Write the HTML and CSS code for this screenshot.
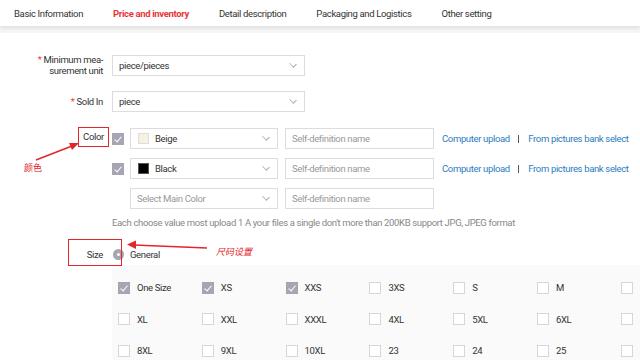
FILE: index.html
```html
<!DOCTYPE html>
<html lang="en">
<head>
    <meta charset="UTF-8">
    <title>Price and inventory</title>
    <link rel="stylesheet" href="styles.css">
</head>
<body>
    <nav class="tabs">
        <a class="tab">Basic Information</a>
        <a class="tab active">Price and inventory</a>
        <a class="tab">Detail description</a>
        <a class="tab">Packaging and Logistics</a>
        <a class="tab">Other setting</a>
    </nav>

    <main class="form">
        <div class="row">
            <div class="label two-line"><span class="req">*</span> Minimum mea-<br>surement unit</div>
            <div class="select wide"><span>piece/pieces</span><i class="chevron"></i></div>
        </div>

        <div class="row sold">
            <div class="label"><span class="req">*</span> Sold In</div>
            <div class="select wide"><span>piece</span><i class="chevron"></i></div>
        </div>

        <div class="row color-row">
            <div class="label"><span class="mark">Color</span></div>
            <div class="color-list">
                <div class="color-item">
                    <span class="check on"></span>
                    <div class="select color"><span class="swatch beige"></span><span>Beige</span><i class="chevron"></i></div>
                    <div class="input">Self-definition name</div>
                    <div class="links"><a>Computer upload</a><span class="bar"></span><a>From pictures bank select</a></div>
                </div>
                <div class="color-item">
                    <span class="check on"></span>
                    <div class="select color"><span class="swatch black"></span><span>Black</span><i class="chevron"></i></div>
                    <div class="input">Self-definition name</div>
                    <div class="links"><a>Computer upload</a><span class="bar"></span><a>From pictures bank select</a></div>
                </div>
                <div class="color-item">
                    <span class="check blank"></span>
                    <div class="select color"><span class="placeholder">Select Main Color</span><i class="chevron"></i></div>
                    <div class="input">Self-definition name</div>
                </div>
            </div>
        </div>

        <p class="hint">Each choose value most upload 1 A your files a single don't more than 200KB support JPG, JPEG format</p>

        <div class="row size-row">
            <div class="label">Size</div>
            <span class="radio"></span>
            <span class="radio-text">General</span>
        </div>

        <div class="sizes">
            <label class="size"><span class="check on"></span>One Size</label>
            <label class="size"><span class="check on"></span>XS</label>
            <label class="size"><span class="check on"></span>XXS</label>
            <label class="size"><span class="check"></span>3XS</label>
            <label class="size"><span class="check"></span>S</label>
            <label class="size"><span class="check"></span>M</label>
            <label class="size"><span class="check"></span></label>

            <label class="size"><span class="check"></span>XL</label>
            <label class="size"><span class="check"></span>XXL</label>
            <label class="size"><span class="check"></span>XXXL</label>
            <label class="size"><span class="check"></span>4XL</label>
            <label class="size"><span class="check"></span>5XL</label>
            <label class="size"><span class="check"></span>6XL</label>
            <label class="size"><span class="check"></span></label>

            <label class="size"><span class="check"></span>8XL</label>
            <label class="size"><span class="check"></span>9XL</label>
            <label class="size"><span class="check"></span>10XL</label>
            <label class="size"><span class="check"></span>23</label>
            <label class="size"><span class="check"></span>24</label>
            <label class="size"><span class="check"></span>25</label>
            <label class="size"><span class="check"></span></label>
        </div>
    </main>

    <!-- red annotations drawn over the screenshot -->
    <div class="note-box size-box"></div>
    <span class="note color-note">颜色</span>
    <span class="note size-note">尺码设置</span>
    <svg class="arrows" width="640" height="360" viewBox="0 0 640 360">
        <line x1="36" y1="160" x2="72" y2="146" stroke="#e2262b" stroke-width="1.5"/>
        <polygon points="79,143 69,143 72,150" fill="#e2262b"/>
        <line x1="207" y1="248" x2="134" y2="245" stroke="#e2262b" stroke-width="1.5"/>
        <polygon points="127,244.5 136,240.5 136,249" fill="#e2262b"/>
    </svg>
</body>
</html>
```

FILE: styles.css
```css
body {
    margin: 0;
    width: 640px;
    height: 360px;
    overflow: hidden;
    position: relative;
    background: #fff;
    font-family: Roboto, "Noto Sans CJK SC", sans-serif;
    font-size: 9.5px;
    letter-spacing: -0.35px;
    color: #333;
}

.tabs {
    display: flex;
    gap: 30px;
    height: 26px;
    align-items: center;
    padding-left: 14px;
    border-bottom: 1px solid #e6e6e6;
    box-shadow: 0 2px 3px rgba(0, 0, 0, 0.08), 0 6px 0 #f7f7f7;
}

.tab {
    color: #333;
    white-space: nowrap;
}

.tab.active {
    color: #e8363d;
    font-weight: bold;
}

.form {
    padding-top: 27px;
}

.row {
    display: flex;
    align-items: center;
}

.label {
    width: 103px;
    margin-right: 9px;
    text-align: right;
    flex: none;
}

.two-line {
    line-height: 11px;
}

.req {
    color: #e8363d;
}

.select {
    display: flex;
    align-items: center;
    box-sizing: border-box;
    height: 21px;
    border: 1px solid #dcdcdc;
    padding: 0 0 0 6px;
    position: relative;
}

.select.wide {
    width: 193px;
}

.chevron {
    position: absolute;
    right: 8px;
    top: 5px;
    width: 5px;
    height: 5px;
    border-right: 1px solid #aaa;
    border-bottom: 1px solid #aaa;
    transform: rotate(45deg) scale(1, 0.8);
}

.sold {
    margin-top: 15px;
}

.color-row {
    margin-top: 16px;
    align-items: flex-start;
}

.mark {
    display: inline-block;
    box-sizing: border-box;
    width: 31px;
    height: 20px;
    line-height: 18px;
    border: 1.5px solid #e2262b;
    text-align: center;
    margin-right: -6px;
    margin-top: -1px;
}

.color-list {
    display: flex;
    flex-direction: column;
    gap: 9px;
}

.color-item {
    display: flex;
    align-items: center;
}

.check {
    display: inline-block;
    box-sizing: border-box;
    width: 12px;
    height: 12px;
    border: 1px solid #d6d6d6;
    background: #fff;
    position: relative;
    flex: none;
}

.check.on {
    background: #a6a5b1;
    border-color: #a6a5b1;
}

.check.on::after {
    content: '';
    position: absolute;
    left: 3px;
    top: 1px;
    width: 3px;
    height: 6px;
    border-right: 1px solid #fff;
    border-bottom: 1px solid #fff;
    transform: rotate(40deg);
}

.check.blank {
    visibility: hidden;
}

.select.color {
    width: 148px;
    margin-left: 6px;
}

.swatch {
    width: 9px;
    height: 9px;
    border: 1px solid #ddd;
    margin-right: 6px;
    margin-left: 1px;
}

.swatch.beige {
    background: #f6f2e2;
}

.swatch.black {
    background: #000;
    border-color: #555;
}

.placeholder {
    color: #999;
}

.input {
    box-sizing: border-box;
    width: 149px;
    height: 21px;
    line-height: 19px;
    border: 1px solid #dcdcdc;
    padding-left: 6px;
    margin-left: 7px;
    color: #999;
}

.links {
    display: flex;
    align-items: center;
    margin-left: 8px;
    color: #2a7dbf;
    white-space: nowrap;
}

.links .bar {
    width: 1.5px;
    height: 8px;
    background: #555;
    margin: 0 9px 0 8px;
}

.hint {
    margin: 7px 0 0 112px;
    line-height: 14px;
    color: #888;
    white-space: nowrap;
}

.size-row {
    margin-top: 14px;
    height: 20px;
}

.radio {
    width: 11px;
    height: 11px;
    border-radius: 50%;
    background: #a6a5b1;
    margin-left: 1px;
    position: relative;
}

.radio::after {
    content: '';
    position: absolute;
    left: 4px;
    top: 4px;
    width: 3px;
    height: 3px;
    border-radius: 50%;
    background: #fff;
}

.radio-text {
    margin-left: 6px;
}

.sizes {
    margin: 1px 0 0 112px;
    padding: 7px 0 0 6px;
    background: #fafafa;
    display: grid;
    grid-template-columns: repeat(7, 83.8px);
    grid-auto-rows: 31.5px;
    align-items: center;
    height: 200px;
    align-content: start;
}

.size {
    display: flex;
    align-items: center;
    gap: 7px;
    white-space: nowrap;
}

/* annotations */
.note-box {
    position: absolute;
    border: 1.5px solid #e2262b;
    box-sizing: border-box;
}

.size-box {
    left: 68px;
    top: 239px;
    width: 54px;
    height: 27px;
}

.note {
    position: absolute;
    color: #e2262b;
    font-size: 9px;
    letter-spacing: 0;
}

.color-note {
    left: 24px;
    top: 161px;
}

.size-note {
    left: 216px;
    top: 245px;
    font-style: italic;
}

.arrows {
    position: absolute;
    left: 0;
    top: 0;
    pointer-events: none;
}
```
